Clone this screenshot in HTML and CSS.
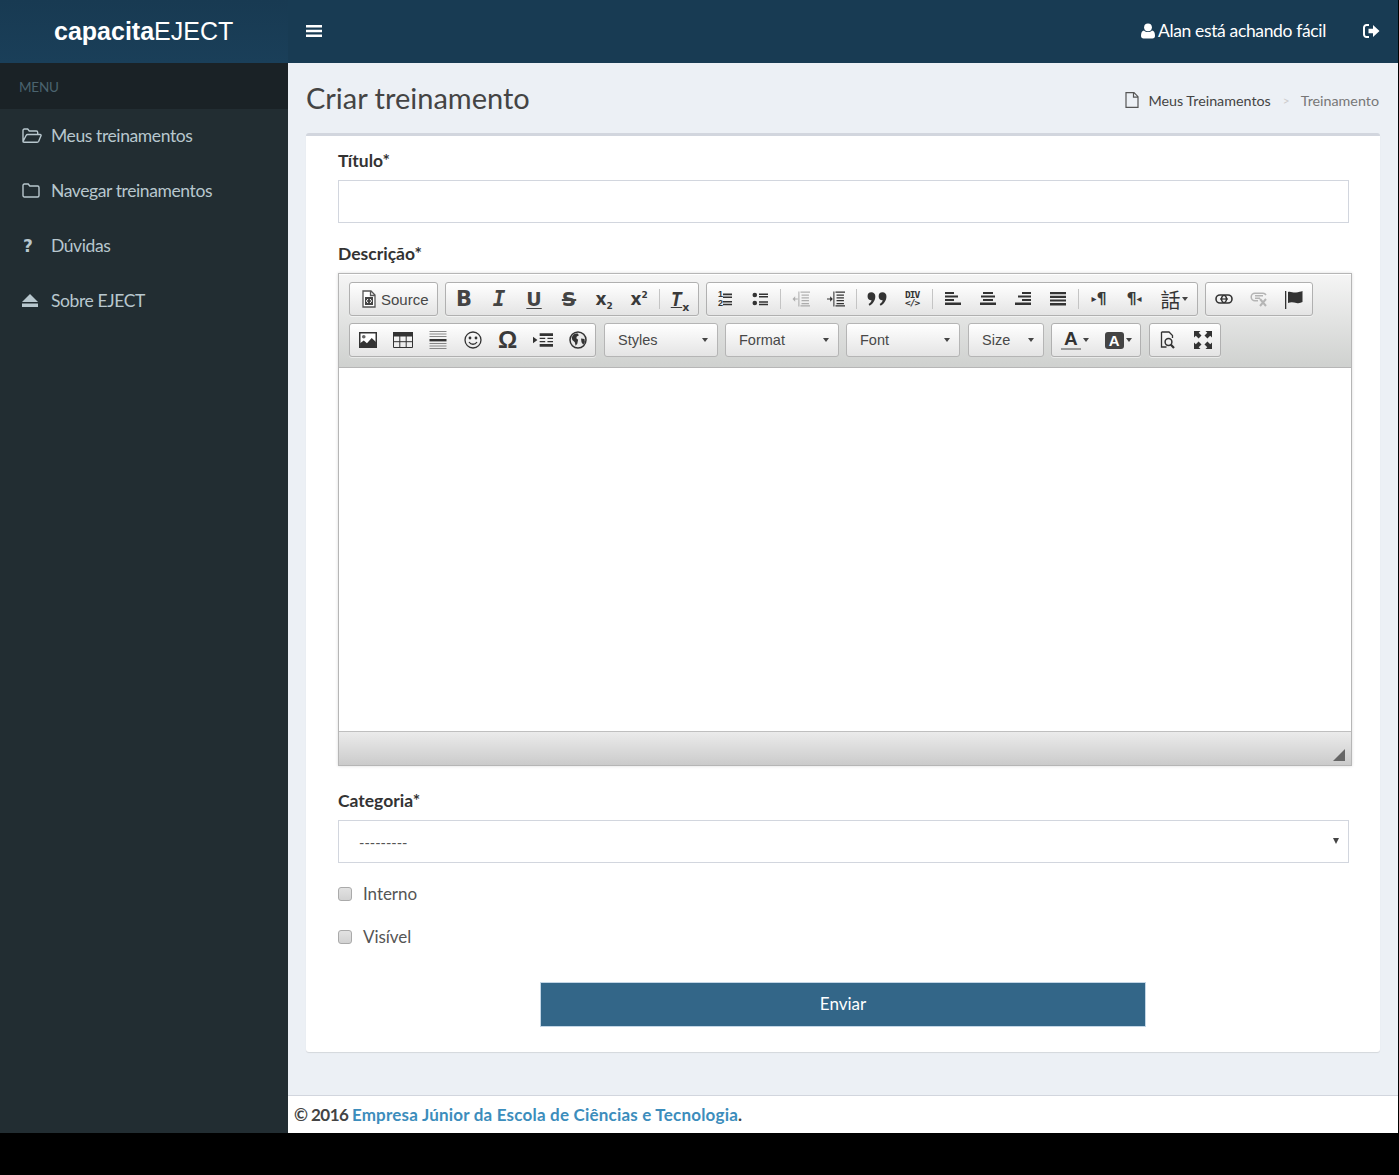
FILE: index.html
```html
<!DOCTYPE html>
<html lang="pt-BR">
<head>
    <meta charset="UTF-8">
    <meta name="viewport" content="width=device-width, initial-scale=1.0">
    <title>Criar treinamento</title>
    <link rel="stylesheet" href="styles.css">
</head>
<body>
<svg class="defs" width="0" height="0">
    <symbol id="i-bars" viewBox="0 0 16 14"><path d="M0 1h16v2.600H0zM0 5.700h16v2.600H0zM0 10.400h16V13H0z"/></symbol>
    <symbol id="i-user" viewBox="0 0 14 16"><circle cx="7" cy="4.300" r="3.900"/><path d="M3 7.500c1 1 2.400 1.500 4 1.500s3-.5 4-1.500c2 .3 3 2.200 3 5.300 0 1.700-1 2.700-2.500 2.700h-9C1 15.500 0 14.500 0 12.800 0 9.700 1 7.800 3 7.500z"/></symbol>
    <symbol id="i-signout" viewBox="0 0 16 14"><path d="M5.500 1H3a2.500 2.500 0 0 0-2.500 2.500v7A2.500 2.500 0 0 0 3 13h2.500" fill="none" stroke="currentColor" stroke-width="2"/><path d="M5 4.700h4.500V1L16 7l-6.500 6V9.300H5z"/></symbol>
    <symbol id="i-folder-open" viewBox="0 0 20 16"><path d="M1 13V2.500C1 1.700 1.600 1 2.400 1h3.300l1.600 2h7c.8 0 1.400.6 1.400 1.400V6.500M1 13.500 4.200 7.300c.3-.5.700-.8 1.300-.8h12.600c.8 0 1.200.6.900 1.300l-2.300 5.400c-.3.600-.8 1.100-1.500 1.100H2c-.7 0-1.100-.4-1-.8z" fill="none" stroke="currentColor" stroke-width="1.400"/></symbol>
    <symbol id="i-folder" viewBox="0 0 18 15"><path d="M1 12.500v-10C1 1.700 1.600 1 2.400 1h3.800l1.600 2h7.800c.8 0 1.400.6 1.400 1.400v8.100c0 .8-.6 1.500-1.400 1.500H2.400C1.600 14 1 13.300 1 12.500z" fill="none" stroke="currentColor" stroke-width="1.400"/></symbol>
    <symbol id="i-eject" viewBox="0 0 16 13"><path d="M8 0l8 8H0zM0 9.600h16V13H0z"/></symbol>
    <symbol id="i-file" viewBox="0 0 14 16"><path d="M1 .7h8l4 4v10.600H1zM8.500 1v4.200H13" fill="none" stroke="currentColor" stroke-width="1.200"/></symbol>

    <symbol id="c-source" viewBox="0 0 16 18"><path d="M2 1h8l4 4v12H2zM9.500 1.500V5.500H13.500" fill="#fff" stroke="#555" stroke-width="1.300"/><rect x="4" y="7" width="8" height="8" fill="#444"/><path d="M7 9 5.300 11 7 13M9 9l1.700 2L9 13" fill="none" stroke="#fff"/></symbol>
    <symbol id="c-ol-lines" viewBox="0 0 10 16"><path d="M1 2.500h9v1.700H1zM1 5.500h9v1.500H1zM1 10h9v1.500H1zM1 12.800h9v1.500H1z"/></symbol>
    <symbol id="c-ul" viewBox="0 0 16 16"><circle cx="2.800" cy="4" r="2.300"/><circle cx="2.800" cy="12" r="2.300"/><path d="M7 2.500h9v1.500H7zM7 5h9v1.500H7zM7 10.200h9v1.500H7zM7 12.800h9v1.500H7z"/></symbol>
    <symbol id="c-indent" viewBox="0 0 17 16"><path d="M8 1h9v1.200H8zM9 3.700h7v1.200H9zM9 6.300h7v1.200H9zM9 9h7v1.200H9zM9 11.700h7v1.200H9zM8 14h9v1.200H8zM6 1v14h1V1zM0 7.500h3V5.500L5.500 8 3 10.500v-2H0z"/></symbol>
    <symbol id="c-outdent" viewBox="0 0 17 16"><path d="M8 1h9v1.200H8zM9 3.700h7v1.200H9zM9 6.300h7v1.200H9zM9 9h7v1.200H9zM9 11.700h7v1.200H9zM8 14h9v1.200H8zM6 1v14h1V1zM5.500 7.500H3V5.500L.5 8 3 10.500v-2h2.500z"/></symbol>
    <symbol id="c-quote" viewBox="0 0 18 14"><path d="M4 1a3.500 3.500 0 0 1 3.500 3.700c0 3.800-2.500 6.800-5.200 8.300l-.9-1.400c1.500-1 2.600-2.400 2.700-3.500A3.400 3.400 0 0 1 4 1zM14 1a3.500 3.500 0 0 1 3.500 3.700c0 3.800-2.500 6.800-5.200 8.300l-.9-1.400c1.500-1 2.600-2.400 2.700-3.500A3.400 3.400 0 0 1 14 1z"/></symbol>
    <symbol id="c-left" viewBox="0 0 16 16"><path d="M0 1h9v2H0zM0 4.500h13v2H0zM0 8h9v2H0zM0 11.500h16v2.500H0z"/></symbol>
    <symbol id="c-center" viewBox="0 0 16 16"><path d="M3 1h10v2H3zM1 4.500h14v2H1zM3 8h10v2H3zM0 11.500h16v2.500H0z"/></symbol>
    <symbol id="c-right" viewBox="0 0 16 16"><path d="M7 1h9v2H7zM3 4.500h13v2H3zM7 8h9v2H7zM0 11.500h16v2.500H0z"/></symbol>
    <symbol id="c-justify" viewBox="0 0 16 16"><path d="M0 1h16v2.200H0zM0 4.700h16v2.200H0zM0 8.400h16v2.200H0zM0 12h16v2.400H0z"/></symbol>
    <symbol id="c-link" viewBox="0 0 18 12"><rect x="1" y="2" width="10.500" height="8" rx="4" fill="none" stroke="currentColor" stroke-width="1.600"/><rect x="6.500" y="2" width="10.500" height="8" rx="4" fill="none" stroke="currentColor" stroke-width="1.600"/><path d="M5 6h8" stroke="currentColor" stroke-width="1.200"/></symbol>
    <symbol id="c-unlink" viewBox="0 0 18 16"><path d="M6.500 2.200H5a3.800 3.800 0 0 0 0 7.600h3M6.500 2.200H13a3.800 3.800 0 0 1 3 1.800M5 4.800h8M5 7.200h5" fill="none" stroke="currentColor" stroke-width="1.500"/><path d="M10 8l6 7M16 8l-6 7" fill="none" stroke="currentColor" stroke-width="2"/></symbol>
    <symbol id="c-flag" viewBox="0 0 18 19"><path d="M0 1h1.300v18H0zM3 2c2.500-1.200 5 1 8 .5 2.500-.4 5-1 6.500-1.500v11c-1.700 1-3.800 1.500-6 1-3-.8-5.500-1.400-8.500 0z"/></symbol>
    <symbol id="c-image" viewBox="0 0 17 15"><path d="M.7.7h15.600v13.600H.7z" fill="#fff" stroke="#333" stroke-width="1.400"/><circle cx="4.500" cy="4.500" r="1.700" fill="#666"/><path d="M1 14V10.500L4.500 8l3 2.500L12 5.500l4 4V14z"/></symbol>
    <symbol id="c-table" viewBox="0 0 20 16"><path d="M0 0h20v4H0z"/><path d="M.5 4h19v11.500H.5zM6.800 4v11.500M13.200 4v11.500M.5 9.700h19" fill="none" stroke="currentColor"/></symbol>
    <symbol id="c-hr" viewBox="0 0 17 18"><path d="M0 8h17v2.400H0z"/><path d="M0 .5h17M0 3h17M0 5.500h17M0 12.500h17M0 15h17M0 17.500h17" stroke="#888" fill="none"/></symbol>
    <symbol id="c-smile" viewBox="0 0 18 18"><circle cx="9" cy="9" r="8" fill="none" stroke="currentColor" stroke-width="1.300"/><circle cx="6" cy="7" r="1.400"/><circle cx="12" cy="7" r="1.400"/><path d="M5 11c2 3 6 3 8 0" fill="none" stroke="currentColor" stroke-width="1.300"/></symbol>
    <symbol id="c-break" viewBox="0 0 18 14"><path d="M0 4l4 3-4 3zM6 1h12v2.400H6zM6 10.600h12V13H6z"/><path d="M6 5.500h5M13 5.500h5M6 8.500h5M13 8.500h5" stroke="currentColor" fill="none"/></symbol>
    <symbol id="c-globe" viewBox="0 0 18 18"><circle cx="9" cy="9" r="8" fill="#e9e9e9" stroke="currentColor" stroke-width="1.500"/><path d="M4.500 3.500c1.500-1 3.500-1.300 4.500-.7l.8 1.700-2 1-.5 1.800 1.800 1.400-.8 4-1.700 2-.8-3.500-2.500-2.200-.6-2.800zM12 7.500l3.500.4.400 3.300-1.700 2.600-1.700-2.600z"/></symbol>
    <symbol id="c-preview" viewBox="0 0 15 18"><path d="M1 1h7.500L12 4.500V7M1 1v15h5" fill="none" stroke="currentColor" stroke-width="1.300"/><circle cx="8" cy="11" r="3.400" fill="none" stroke="currentColor" stroke-width="1.500"/><path d="M10.200 13.500 13.500 17" stroke="currentColor" stroke-width="2.200"/></symbol>
    <symbol id="c-max" viewBox="0 0 18 18"><path d="M0 0h6.500L4.700 1.800 7.500 4.600 4.600 7.500 1.800 4.700 0 6.500zM18 0v6.500l-1.800-1.800-2.800 2.800-2.900-2.900 2.800-2.800L11.500 0zM0 18v-6.500l1.800 1.800 2.800-2.800 2.900 2.900-2.800 2.800L6.500 18zM18 18h-6.500l1.800-1.800-2.800-2.800 2.900-2.900 2.800 2.800 1.800-1.800z"/></symbol>
</svg>

<div class="app">
    <header class="topbar">
        <a class="logo"><b>capacita</b>EJECT</a>
        <nav class="topnav">
            <svg class="icon-bars"><use href="#i-bars"/></svg>
            <span class="user"><svg class="icon-user"><use href="#i-user"/></svg>Alan está achando fácil</span>
            <svg class="icon-signout"><use href="#i-signout"/></svg>
        </nav>
    </header>
    <div class="columns">
        <aside class="sidebar">
            <div class="menu-title">MENU</div>
            <ul class="menu">
                <li><span class="menu-icon"><svg class="ico-open"><use href="#i-folder-open"/></svg></span>Meus treinamentos</li>
                <li><span class="menu-icon"><svg class="ico-folder"><use href="#i-folder"/></svg></span>Navegar treinamentos</li>
                <li><span class="menu-icon menu-q">?</span>Dúvidas</li>
                <li><span class="menu-icon"><svg class="ico-eject"><use href="#i-eject"/></svg></span>Sobre EJECT</li>
            </ul>
        </aside>
        <main class="main">
            <section class="page-head">
                <h1>Criar treinamento</h1>
                <ol class="crumbs">
                    <li><svg class="ico-file"><use href="#i-file"/></svg>Meus Treinamentos</li>
                    <li class="crumb-sep">&gt;</li>
                    <li class="crumb-on">Treinamento</li>
                </ol>
            </section>
            <form class="box">
                <label class="field-label" for="titulo">Título*</label>
                <input class="field" type="text" id="titulo">

                <label class="field-label label-desc">Descrição*</label>
                <div class="editor">
                    <div class="cke-top">
                        <div class="cke-row">
                            <div class="cke-group">
                                <span class="cke-btn cke-source"><svg class="s18"><use href="#c-source"/></svg>Source</span>
                            </div>
                            <div class="cke-group">
                                <span class="cke-btn gl gl-b">B</span>
                                <span class="cke-btn gl gl-i">I</span>
                                <span class="cke-btn gl gl-u">U</span>
                                <span class="cke-btn gl gl-s">S</span>
                                <span class="cke-btn gl gl-x"><span>x<sub>2</sub></span></span>
                                <span class="cke-btn gl gl-x"><span>x<sup>2</sup></span></span>
                                <span class="cke-sep"></span>
                                <span class="cke-btn gl gl-tx"><span><i>T</i><sub>x</sub></span></span>
                            </div>
                            <div class="cke-group">
                                <span class="cke-btn"><span class="ol-nums">1<br>2</span><svg class="ol-lines"><use href="#c-ol-lines"/></svg></span>
                                <span class="cke-btn"><svg class="s16"><use href="#c-ul"/></svg></span>
                                <span class="cke-sep"></span>
                                <span class="cke-btn is-off"><svg class="s18"><use href="#c-outdent"/></svg></span>
                                <span class="cke-btn"><svg class="s18"><use href="#c-indent"/></svg></span>
                                <span class="cke-sep"></span>
                                <span class="cke-btn"><svg class="s20"><use href="#c-quote"/></svg></span>
                                <span class="cke-btn gl-div"><span>DIV</span><span>&lt;/&gt;</span></span>
                                <span class="cke-sep"></span>
                                <span class="cke-btn"><svg class="s16"><use href="#c-left"/></svg></span>
                                <span class="cke-btn"><svg class="s16"><use href="#c-center"/></svg></span>
                                <span class="cke-btn"><svg class="s16"><use href="#c-right"/></svg></span>
                                <span class="cke-btn"><svg class="s16"><use href="#c-justify"/></svg></span>
                                <span class="cke-sep"></span>
                                <span class="cke-btn gl gl-para"><small>&#9656;</small>¶</span>
                                <span class="cke-btn gl gl-para">¶<small>&#9666;</small></span>
                                <span class="cke-btn cke-lang"><span class="gl-lang">話</span><span class="caret"></span></span>
                            </div>
                            <div class="cke-group">
                                <span class="cke-btn"><svg class="s18"><use href="#c-link"/></svg></span>
                                <span class="cke-btn is-light"><svg class="s18"><use href="#c-unlink"/></svg></span>
                                <span class="cke-btn btn-flag"><svg class="s18"><use href="#c-flag"/></svg></span>
                            </div>
                        </div>
                        <div class="cke-row">
                            <div class="cke-group group-tight">
                                <span class="cke-btn"><svg class="s18"><use href="#c-image"/></svg></span>
                                <span class="cke-btn"><svg class="s20"><use href="#c-table"/></svg></span>
                                <span class="cke-btn"><svg class="s18"><use href="#c-hr"/></svg></span>
                                <span class="cke-btn"><svg class="s18"><use href="#c-smile"/></svg></span>
                                <span class="cke-btn gl gl-omega">Ω</span>
                                <span class="cke-btn"><svg class="s20"><use href="#c-break"/></svg></span>
                                <span class="cke-btn"><svg class="s18"><use href="#c-globe"/></svg></span>
                            </div>
                            <div class="cke-combo combo-styles">Styles<span class="caret"></span></div>
                            <div class="cke-combo combo-format">Format<span class="caret"></span></div>
                            <div class="cke-combo combo-font">Font<span class="caret"></span></div>
                            <div class="cke-combo combo-size">Size<span class="caret"></span></div>
                            <div class="cke-group group-colors">
                                <span class="cke-btn cke-color"><span class="gl-txt">A</span><span class="caret"></span></span>
                                <span class="cke-btn cke-color"><span class="gl-bg">A</span><span class="caret"></span></span>
                            </div>
                            <div class="cke-group group-tight">
                                <span class="cke-btn"><svg class="s18"><use href="#c-preview"/></svg></span>
                                <span class="cke-btn"><svg class="s18"><use href="#c-max"/></svg></span>
                            </div>
                        </div>
                    </div>
                    <div class="cke-content"></div>
                    <div class="cke-bottom"><span class="cke-resize"></span></div>
                </div>

                <label class="field-label label-cat" for="categoria">Categoria*</label>
                <div class="select-wrap">
                    <select class="field field-select" id="categoria">
                        <option>---------</option>
                    </select>
                </div>

                <label class="check check-first"><input type="checkbox">Interno</label>
                <label class="check"><input type="checkbox">Visível</label>

                <button class="submit" type="button">Enviar</button>
            </form>
            <footer class="footer"><b>© 2016 <a>Empresa Júnior da Escola de Ciências e Tecnologia</a>.</b></footer>
        </main>
    </div>
</div>
</body>
</html>
```

FILE: styles.css
```css
html, body {
    margin: 0;
    height: 100%;
    background: #000;
}
body {
    font-family: "Lato", "Open Sans", sans-serif;
    font-size: 16px;
    color: #333;
}
.defs {
    position: absolute;
}
svg {
    fill: currentColor;
    display: block;
}
.app {
    width: 1398px;
    height: 1133px;
    display: flex;
    flex-direction: column;
}

/* top bar */
.topbar {
    height: 63px;
    flex: none;
    display: flex;
    background: #183b53;
    color: #fff;
}
.logo {
    width: 288px;
    padding-left: 54px;
    box-sizing: border-box;
    font: 25px/63px "Liberation Sans", Arial, sans-serif;
    background: linear-gradient(#183a52, #1a3f59);
}
.logo b {
    font-weight: bold;
}
.topnav {
    flex: 1;
    display: flex;
    align-items: center;
    padding: 0 18px 2px 18px;
}
.icon-bars {
    width: 16px;
    height: 14px;
    margin-right: auto;
}
.icon-user {
    width: 14px;
    height: 16px;
    margin-right: 3px;
}
.user {
    display: flex;
    align-items: center;
    font-size: 17.500px;
    letter-spacing: -.35px;
}
.icon-signout {
    width: 17px;
    height: 14px;
    margin-left: 37px;
}

.columns {
    flex: 1;
    display: flex;
    min-height: 0;
}

/* sidebar */
.sidebar {
    width: 288px;
    flex: none;
    background: #222d32;
    color: #b8c7ce;
}
.menu-title {
    height: 46px;
    line-height: 48px;
    padding-left: 19px;
    font-size: 13.500px;
    letter-spacing: -.2px;
    color: #4b646f;
    background: #1a2226;
}
.menu {
    list-style: none;
    margin: 0;
    padding: 0;
}
.menu li {
    height: 55px;
    padding-bottom: 2px;
    box-sizing: border-box;
    display: flex;
    align-items: center;
    font-size: 17.500px;
    letter-spacing: -.4px;
}
.menu-icon {
    width: 51px;
    display: flex;
    justify-content: flex-start;
    padding-left: 22px;
    box-sizing: border-box;
}
.ico-open { width: 20px; height: 16px; }
.ico-folder { width: 18px; height: 15px; }
.ico-eject { width: 16px; height: 13px; }
.menu-q {
    padding-left: 23px;
    font: bold 17px "DejaVu Sans", sans-serif;
}

/* page */
.main {
    flex: 1;
    min-width: 0;
    display: flex;
    flex-direction: column;
    background: #ecf0f5;
}
.page-head {
    height: 70px;
    flex: none;
    display: flex;
    justify-content: space-between;
    align-items: center;
    padding: 0 19px 2px 18px;
    box-sizing: border-box;
}
h1 {
    margin: 0;
    font-size: 29px;
    font-weight: 400;
    color: #444;
}
.crumbs {
    list-style: none;
    display: flex;
    align-items: center;
    margin: 6px 0 0;
    padding: 0;
    font-size: 14.300px;
    color: #444;
}
.crumbs li {
    display: flex;
    align-items: center;
}
.ico-file {
    width: 14px;
    height: 16px;
    margin-right: 9px;
    color: #555;
}
.crumb-sep {
    margin: 0 11px 0 12px;
    font-size: 12px;
    color: #ccc;
}
.crumb-on {
    color: #777;
}

/* form card */
.box {
    margin: 0 18px;
    height: 919px;
    flex: none;
    box-sizing: border-box;
    padding: 14px 31px 0 32px;
    border-top: 3px solid #d2d6de;
    border-radius: 3px;
    background: #fff;
    box-shadow: 0 1px 1px rgba(0, 0, 0, .1);
}
.field-label {
    display: block;
    height: 22px;
    line-height: 22px;
    margin-bottom: 8px;
    font-size: 17.500px;
    font-weight: 700;
    color: #333;
}
.field {
    display: block;
    width: 100%;
    height: 43px;
    box-sizing: border-box;
    border: 1px solid #d2d6de;
    border-radius: 0;
    background: #fff;
    outline: none;
}
.label-desc {
    margin: 20px 0 8px;
}
.label-cat {
    margin: 24px 0 8px;
}
.select-wrap {
    position: relative;
}
.select-wrap::after {
    content: "";
    position: absolute;
    right: 10px;
    top: 18px;
    border-style: solid;
    border-width: 6px 3.500px 0;
    border-color: #444 transparent transparent;
}
.field-select {
    appearance: none;
    padding: 2px 0 0 20px;
    font: 14.500px "Lato", sans-serif;
    color: #555;
}
.check {
    display: flex;
    align-items: center;
    height: 24px;
    margin-top: 19px;
    font-size: 17px;
    letter-spacing: -.05px;
    color: #555;
}
.check-first {
    margin-top: 18px;
}
.check input {
    appearance: none;
    width: 14px;
    height: 14px;
    margin: 2px 11px 0 0;
    border: 1px solid #aaa;
    border-radius: 3px;
    background: linear-gradient(#e2e2e2, #d2d2d2);
}
.submit {
    display: block;
    width: 606px;
    height: 45px;
    margin: 34px 0 0 202px;
    padding: 0 0 3px;
    border: 1px solid #c3d6e6;
    background: #336688;
    color: #fff;
    font: 17px "Lato", sans-serif;
}

.footer {
    margin-top: 43px;
    height: 38px;
    flex: none;
    box-sizing: border-box;
    padding-left: 6px;
    line-height: 38px;
    border-top: 1px solid #d2d6de;
    background: #fff;
    font-size: 17px;
    letter-spacing: -.55px;
    color: #444;
}
.footer a {
    letter-spacing: .2px;
    color: #3c8dbc;
}

/* editor */
.editor {
    width: 1014px;
    height: 493px;
    box-sizing: border-box;
    display: flex;
    flex-direction: column;
    border: 1px solid #b6b6b6;
    box-shadow: 0 0 3px rgba(0, 0, 0, .15);
}
.cke-top {
    height: 94px;
    flex: none;
    box-sizing: border-box;
    padding: 8px 0 0 10px;
    display: flex;
    flex-direction: column;
    gap: 7px;
    border-bottom: 1px solid #b6b6b6;
    background: linear-gradient(#f5f5f5, #cfd1cf);
    box-shadow: inset 0 1px 0 #fff;
}
.cke-row {
    display: flex;
    gap: 7px;
}
.cke-group {
    height: 34px;
    box-sizing: border-box;
    display: flex;
    padding: 0 0 0 1px;
    border: 1px solid #b0b0b0;
    border-radius: 3px;
    background: linear-gradient(#fff, #e4e4e4);
    box-shadow: 0 1px 0 rgba(255, 255, 255, .5);
}
.group-tight {
    padding: 0;
}
.cke-btn {
    width: 35px;
    display: flex;
    align-items: center;
    justify-content: center;
    color: #333;
    font: 16px "Liberation Sans", sans-serif;
}
.cke-sep {
    width: 1px;
    height: 20px;
    margin: 6px 2.500px 0;
    background: #c4c4c4;
}
.is-off { opacity: .35; }
.is-light { color: #b5b5b5; }
.s16 { width: 16px; height: 16px; }
.s18 { width: 18px; height: 18px; }
.s20 { width: 20px; height: 16px; }

.cke-source {
    width: auto;
    padding: 0 8px 0 9px;
    font-size: 15px;
    color: #474747;
}
.cke-source svg {
    margin-right: 3px;
}
.gl {
    font: bold 20px "DejaVu Sans", sans-serif;
    line-height: 1;
    color: #3a3a3a;
}
.gl-b {
    font-size: 21px;
    color: #444;
}
.gl-i {
    font: italic bold 21px "DejaVu Sans Mono", monospace;
    color: #444;
}
.gl-u {
    font-size: 19px;
    text-decoration: underline;
    text-underline-offset: 2px;
    color: #444;
}
.gl-s {
    text-decoration: line-through;
    color: #444;
}
.gl-x {
    font-size: 17px;
}
.gl-x sub, .gl-x sup {
    font-size: 9px;
    line-height: 0;
}
.gl-tx {
    font: italic bold 19px "DejaVu Sans Mono", monospace;
}
.gl-tx i {
    text-decoration: underline;
    text-underline-offset: 1px;
}
.gl-tx sub {
    font: bold 11px "DejaVu Sans", sans-serif;
    line-height: 0;
}
.ol-nums {
    font: bold 9px/9px "Liberation Sans", sans-serif;
    margin-right: -1px;
}
.ol-lines {
    width: 10px;
    height: 16px;
}
.gl-div {
    flex-direction: column;
    font: bold 9.500px/8.500px "DejaVu Sans Mono", monospace;
    letter-spacing: -1px;
}
.gl-para {
    font-size: 16px;
}
.gl-para small {
    font-size: 10px;
}
.gl-omega {
    font: bold 24px "Liberation Sans", sans-serif;
}
.btn-flag svg {
    height: 19px;
}
.cke-lang {
    width: 45px;
    gap: 1px;
}
.gl-lang {
    font: 20px "Noto Sans CJK TC", sans-serif;
    color: #333;
}
.caret {
    display: inline-block;
    border-style: solid;
    border-width: 4px 3.500px 0;
    border-color: #444 transparent transparent;
}
.cke-combo {
    height: 34px;
    box-sizing: border-box;
    display: flex;
    align-items: center;
    justify-content: space-between;
    padding: 0 9px 0 13px;
    border: 1px solid #b5b5b5;
    border-radius: 3px;
    background: linear-gradient(#fff, #e4e4e4);
    font: 14.500px "Liberation Sans", sans-serif;
    color: #484848;
}
.combo-styles {
    width: 114px;
    margin-left: 1px;
}
.combo-format, .combo-font { width: 114px; }
.combo-size { width: 76px; margin-left: 1px; }
.group-colors {
    width: 90px;
}
.group-colors + .cke-group {
    margin-left: 1px;
}
.cke-color {
    width: 44px;
    gap: 2px;
}
.gl-txt {
    width: 20px;
    text-align: center;
    font: bold 19px/18px "Liberation Sans", sans-serif;
    border-bottom: 2px solid #999;
}
.gl-bg {
    width: 19px;
    height: 17px;
    text-align: center;
    border-radius: 3px;
    font: bold 15px/17px "Liberation Sans", sans-serif;
    color: #fff;
    background: #444;
}
.cke-content {
    flex: 1;
    background: #fff;
}
.cke-bottom {
    height: 33px;
    flex: none;
    position: relative;
    border-top: 1px solid #bfbfbf;
    background: linear-gradient(#ebebeb, #cbcbcb);
}
.cke-resize {
    position: absolute;
    right: 6px;
    bottom: 4px;
    border-style: solid;
    border-width: 0 0 12px 12px;
    border-color: transparent transparent #666;
}
```
